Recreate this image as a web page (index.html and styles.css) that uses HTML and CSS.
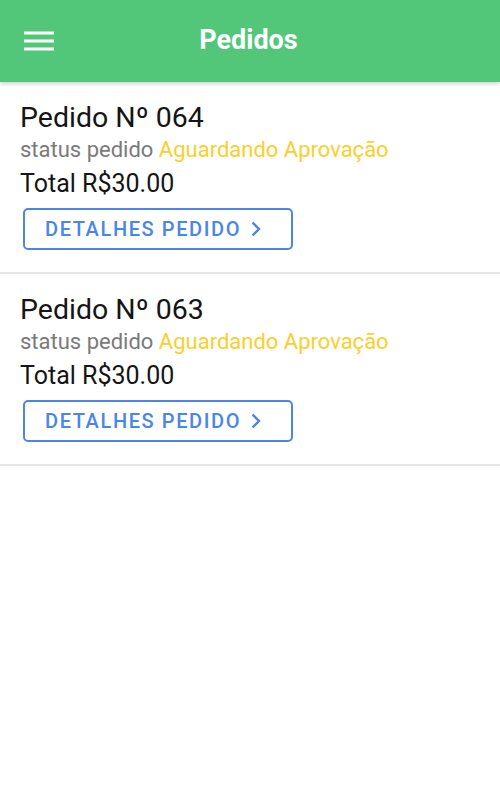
FILE: index.html
```html
<!DOCTYPE html>
<html lang="pt">
<head>
<meta charset="utf-8">
<title>Pedidos</title>
<link rel="stylesheet" href="styles.css">
</head>
<body>
<header class="topbar">
  <div class="menu-btn">
    <svg width="30" height="22" viewBox="0 0 30 22"><rect x="0" y="1.5" width="30" height="3" fill="#fff"/><rect x="0" y="9.5" width="30" height="3" fill="#fff"/><rect x="0" y="17.5" width="30" height="3" fill="#fff"/></svg>
  </div>
  <h1 class="title">Pedidos</h1>
  <div></div>
</header>
<main class="list">
  <section class="order">
    <div class="order-num">Pedido Nº 064</div>
    <div class="order-status">status pedido <span class="status-val">Aguardando Aprovação</span></div>
    <div class="order-total">Total R$30.00</div>
    <button class="details-btn">DETALHES PEDIDO <svg class="chev" width="12" height="18" viewBox="0 0 12 18"><path d="M2.5 2.5 L9 9 L2.5 15.5" fill="none" stroke="#4a86e8" stroke-width="2.3"/></svg></button>
  </section>
  <section class="order">
    <div class="order-num">Pedido Nº 063</div>
    <div class="order-status">status pedido <span class="status-val">Aguardando Aprovação</span></div>
    <div class="order-total">Total R$30.00</div>
    <button class="details-btn">DETALHES PEDIDO <svg class="chev" width="12" height="18" viewBox="0 0 12 18"><path d="M2.5 2.5 L9 9 L2.5 15.5" fill="none" stroke="#4a86e8" stroke-width="2.3"/></svg></button>
  </section>
</main>
</body>
</html>
```
FILE: styles.css
```css
* { box-sizing: border-box; }
html, body { margin: 0; padding: 0; background: #fff; }
body { font-family: Roboto, "Noto Sans", sans-serif; width: 500px; height: 800px; overflow: hidden; }

.topbar {
  height: 82px;
  background: #52c77a;
  display: grid;
  grid-template-columns: 1fr auto 1fr;
  align-items: center;
  padding: 0 24px;
  box-shadow: 0 2px 4px rgba(0,0,0,0.18);
  position: relative;
}
.menu-btn { display: flex; align-items: center; height: 22px; }
.menu-btn svg { display: block; }
.title {
  margin: 0 0 2px -3px;
  color: #fff;
  font-size: 27px;
  font-weight: 700;
  text-align: center;
}

.list { display: flex; flex-direction: column; }
.order {
  padding: 19px 20px 22px;
  border-bottom: 2px solid #e6e6e6;
  display: flex;
  flex-direction: column;
  align-items: flex-start;
}
.order-num { font-size: 28.5px; line-height: 34px; color: #151515; }
.order-status { font-size: 22px; line-height: 30px; color: #7a7a7a; }
.status-val { color: #f9cf2e; }
.order-total { font-size: 25px; line-height: 38px; color: #151515; }
.details-btn {
  margin-top: 5px;
  margin-left: 3px;
  width: 270px;
  height: 42px;
  border: 2px solid #4a86e8;
  border-radius: 5px;
  background: #fff;
  color: #4a86e8;
  font-family: Roboto, sans-serif;
  font-weight: 500;
  font-size: 20px;
  letter-spacing: 1.6px;
  display: flex;
  align-items: center;
  padding: 0 0 0 20px;
  gap: 9px;
}
.chev { display: block; }
```
